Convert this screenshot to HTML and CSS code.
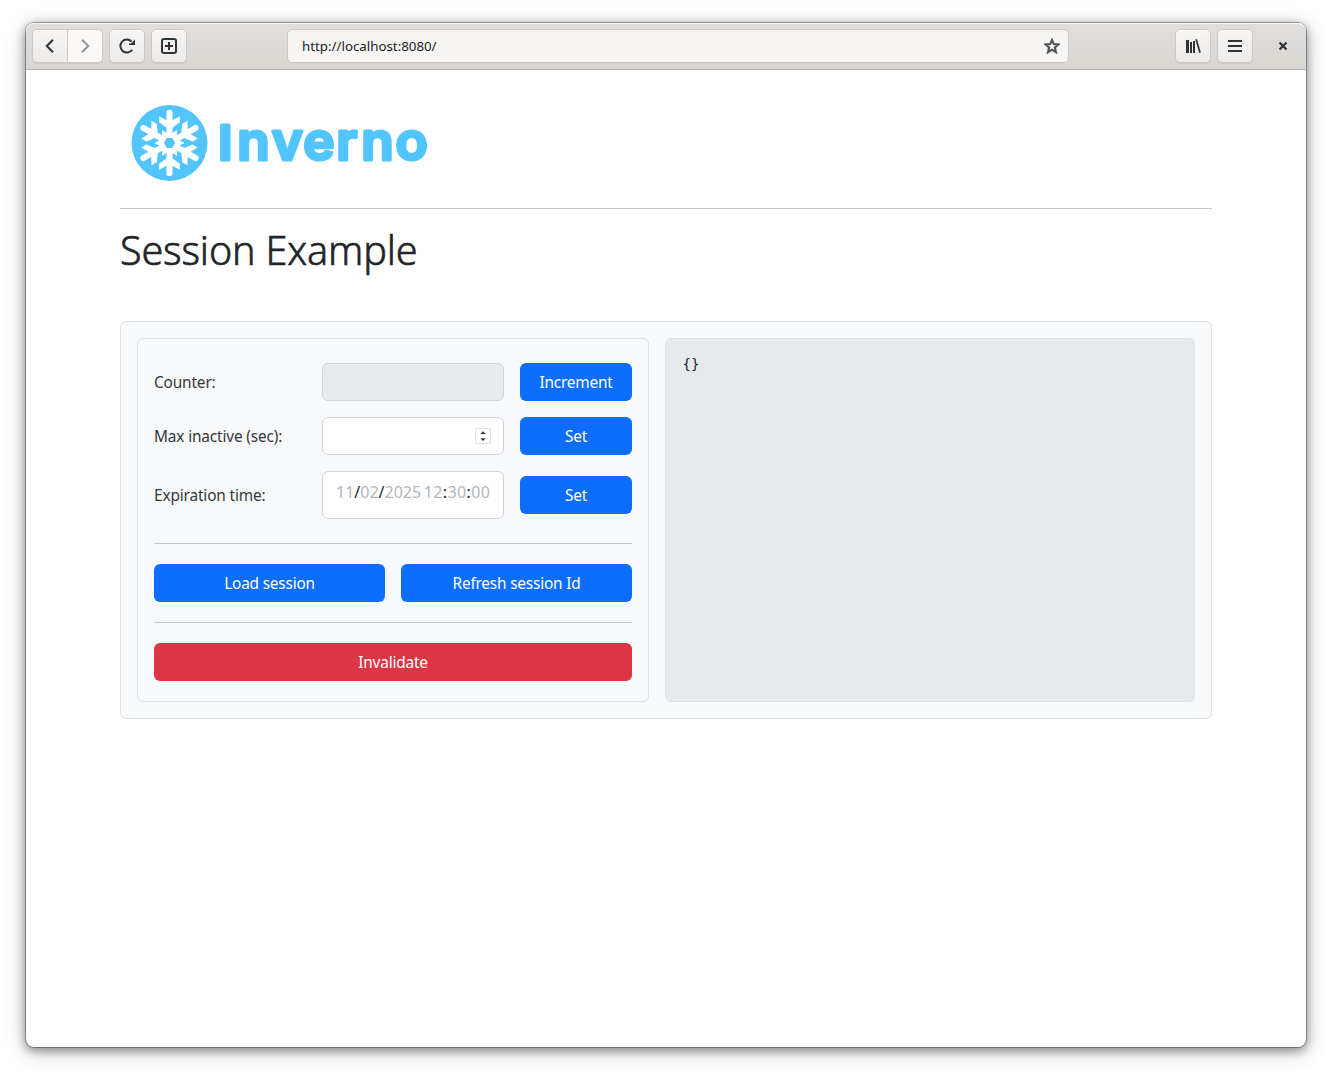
FILE: index.html
```html
<!DOCTYPE html>
<html lang="en">
<head>
<meta charset="utf-8">
<title>Session Example</title>
<link rel="stylesheet" href="styles.css">
</head>
<body>
<div class="window">
  <header class="toolbar">
    <div class="nav-pair">
      <button class="tool back" aria-label="Back"><svg width="16" height="16" viewBox="0 0 16 16"><path d="M11 1.8 4.8 8l6.2 6.2" fill="none" stroke="#2e3436" stroke-width="2"/></svg></button>
      <button class="tool forward" aria-label="Forward"><svg width="16" height="16" viewBox="0 0 16 16"><path d="M5 1.8 11.2 8 5 14.2" fill="none" stroke="#929595" stroke-width="2"/></svg></button>
    </div>
    <button class="tool" aria-label="Reload"><svg width="16" height="16" viewBox="0 0 16 16"><path d="M13.2 11.8A6.5 6.5 0 1 1 12.6 3.6" fill="none" stroke="#2e3436" stroke-width="2"/><path d="M16 1.5V7h-6V5.5h2z" fill="#2e3436"/></svg></button>
    <button class="tool" aria-label="New tab"><svg width="16" height="16" viewBox="0 0 16 16"><rect x="1" y="1" width="14" height="14" rx="2" fill="none" stroke="#2e3436" stroke-width="2"/><path d="M8 4v8M4 8h8" stroke="#2e3436" stroke-width="2"/></svg></button>
    <div class="address"><span class="url">http://localhost:8080/</span><svg width="16" height="16" viewBox="0 0 16 16"><path d="m8 1.8 1.8 4.3 4.7.4-3.6 3 1.1 4.7L8 11.7l-4 2.5 1.1-4.7-3.6-3 4.7-.4z" fill="none" stroke="#505453" stroke-width="2.1"/></svg></div>
    <button class="tool library" aria-label="Library"><svg width="16" height="16" viewBox="0 0 16 16"><path d="M1 2h3v13H1zM5 4h2v11H5zM8 3h2v12H8zM10.3 1.4l1.6-.4 4 13.6-1.7.4z" fill="#2e3436"/></svg></button>
    <button class="tool" aria-label="Menu"><svg width="16" height="16" viewBox="0 0 16 16"><path d="M1 3h14M1 8h14M1 13h14" stroke="#2e3436" stroke-width="2"/></svg></button>
    <button class="close" aria-label="Close"><svg width="16" height="16" viewBox="0 0 16 16"><path d="m4.5 4.5 7 7m0-7-7 7" stroke="#2e3436" stroke-width="2.2"/></svg></button>
  </header>
  <main class="page">
    <svg class="logo" width="320" height="100" viewBox="0 0 320 100" role="img" aria-label="Inverno">
      <defs>
        <g id="arm">
          <path d="M-3-4V-15.3L-10.3-20.7V-26.7L-3-22.8V-31.5L-1.5-33H1.5L3-31.5V-22.8L10.3-26.7V-20.7L3-15.3V-4z"/>
          <path d="M-6-4-7.5-12.8-2-9.5H2L7.5-12.8 6-4z"/>
        </g>
      </defs>
      <circle cx="49.5" cy="48" r="38" fill="#52c5ff"/>
      <g transform="translate(49.5 48)" fill="#fff">
        <use href="#arm"/>
        <use href="#arm" transform="rotate(60)"/>
        <use href="#arm" transform="rotate(120)"/>
        <use href="#arm" transform="rotate(180)"/>
        <use href="#arm" transform="rotate(240)"/>
        <use href="#arm" transform="rotate(300)"/>
        <path d="M-5.6 0-2.8-4.9H2.8L5.6 0 2.8 4.9H-2.8z" fill="#52c5ff"/>
      </g>
      <text class="wordmark" y="65" x="98.5 117.2 151.8 183.2 216.2 241.2 275.5"><tspan class="initial">I</tspan>nverno</text>
    </svg>
    <hr class="rule">
    <h1>Session Example</h1>
    <div class="panel">
      <section class="controls">
        <div class="row"><label for="counter">Counter:</label><input id="counter" class="field disabled" disabled><button class="btn increment">Increment</button></div>
        <div class="row"><label>Max inactive (sec):</label><div class="field number"><span class="spin"><svg width="14" height="14" viewBox="0 0 14 14"><path d="M4.3 5 7 2.2 9.7 5zM4.3 9.2 7 12l2.7-2.8z" fill="#2e3436"/></svg></span></div><button class="btn">Set</button></div>
        <div class="row"><label class="expire">Expiration time:</label><div class="field date"><span class="day">11<b>/</b>02<b>/</b>2025</span><span class="time">12<b>:</b>30<b>:</b>00</span></div><button class="btn">Set</button></div>
        <hr class="rule first">
        <div class="pair"><button class="btn load">Load session</button><button class="btn refresh">Refresh session Id</button></div>
        <hr class="rule second">
        <button class="btn danger">Invalidate</button>
      </section>
      <pre class="output">{}</pre>
    </div>
  </main>
</div>
</body>
</html>
```
FILE: styles.css
```css
* { box-sizing: border-box; }
body {
  margin: 0;
  min-height: 1076px;
  padding: 23px 26px 0;
  background: #fff;
  color: #212529;
  font: 16px/24px "Noto Sans", sans-serif;
}
button { font: inherit; margin: 0; padding: 0; }
svg { display: block; flex: none; }

.window {
  width: 1280px;
  height: 1024px;
  border-radius: 8px;
  background: #fff;
  box-shadow: 0 0 0 1px rgba(0,0,0,.3), 0 3px 10px 1px rgba(0,0,0,.36), 0 4px 22px rgba(0,0,0,.24);
}

.toolbar {
  display: flex;
  height: 47px;
  padding: 6px;
  border-bottom: 1px solid #bab4ad;
  border-radius: 8px 8px 0 0;
  background: linear-gradient(#e1dedb, #dad6d2);
  box-shadow: inset 0 1px #f8f7f6;
}
.tool {
  display: grid;
  place-items: center;
  width: 36px;
  height: 34px;
  margin-right: 6px;
  border: 1px solid #cdc7c2;
  border-radius: 5px;
  background: linear-gradient(#f6f5f4, #edebe9);
  box-shadow: inset 0 1px #fff, 0 1px 1px rgba(0,0,0,.07);
}
.nav-pair { display: flex; margin-right: 6px; }
.back { margin: 0; border-radius: 5px 0 0 5px; }
.forward { width: 35px; margin: 0; border-left: 0; border-radius: 0 5px 5px 0; background: #faf9f8; }
.address {
  display: flex;
  align-items: center;
  justify-content: space-between;
  width: 782px;
  height: 34px;
  margin: 0 106px 0 94px;
  padding: 0 8px 0 14px;
  border: 1px solid #cdc7c2;
  border-radius: 5px;
  background: linear-gradient(#f4f3f2, #f8f7f6);
}
.url { color: #1b1d1e; font-size: 13.3px; }
.close { display: grid; place-items: center; width: 16px; height: 34px; margin-left: 16px; border: 0; background: none; }

.page { width: 1092px; margin: 0 auto; padding-top: 25px; }
.wordmark {
  fill: #52c5ff;
  stroke: #52c5ff;
  stroke-width: 3.2px;
  stroke-linejoin: round;
  font: 600 53px Inter, sans-serif;
}
.initial { font-size: 48.5px; font-weight: 700; }
.rule { height: 1px; margin: 0; border: 0; background: #c3c5c8; }
.logo + .rule { margin-top: 13px; }
h1 {
  margin: 17px 0 47px;
  font-size: 39.5px;
  font-weight: 300;
  line-height: 48px;
  letter-spacing: -.15px;
  white-space: nowrap;
  -webkit-text-stroke: .6px #212529;
}

.panel {
  display: grid;
  grid-template-columns: 512px 530px;
  gap: 16px;
  height: 398px;
  padding: 16px;
  border: 1px solid #dee2e6;
  border-radius: 6px;
  background: #f8f9fb;
}
.controls { padding: 24px 16px 0; border: 1px solid #dee2e6; border-radius: 6px; }
.row {
  display: grid;
  grid-template-columns: 152px 182px 112px;
  gap: 16px;
  align-items: center;
  margin-bottom: 16px;
}
label { padding-top: 2px; white-space: nowrap; color: #34383c; letter-spacing: -.15px; font-size: 15.4px; }
.field {
  width: 182px;
  height: 38px;
  margin: 0;
  padding: 0 12px;
  border: 1px solid #ced4da;
  border-radius: 6px;
  background: #fff;
}
.disabled { background: #e8ebee; }
.number { display: flex; align-items: center; justify-content: flex-end; }
.spin { border: 1px solid #e3e3e3; border-radius: 2px; }
.date { display: flex; justify-content: space-between; height: 48px; padding: 8px 13px; color: #b1b8bf; font-size: 16px; white-space: nowrap; }
.date b { color: #212529; font-weight: 400; }
.time { letter-spacing: .4px; margin-right: -.4px; }
.btn {
  width: 100%;
  height: 38px;
  padding-top: 2px;
  border: 0;
  border-radius: 6px;
  background: #0d6efd;
  color: #fff;
  font-size: 15.4px;
  letter-spacing: -.2px;
  line-height: 36px;
}
.first { margin-top: 24px; }
.pair { display: grid; grid-template-columns: 1fr 1fr; gap: 16px; margin: 20px 0; }
.danger { display: block; margin-top: 20px; background: #dc3545; }
.output {
  margin: 0;
  padding: 13px 16px 13px 16.5px;
  border: 1px solid #dee2e6;
  border-radius: 6px;
  background: #e8ebee;
  font: 14px/24px "DejaVu Sans Mono", monospace;
}
```
